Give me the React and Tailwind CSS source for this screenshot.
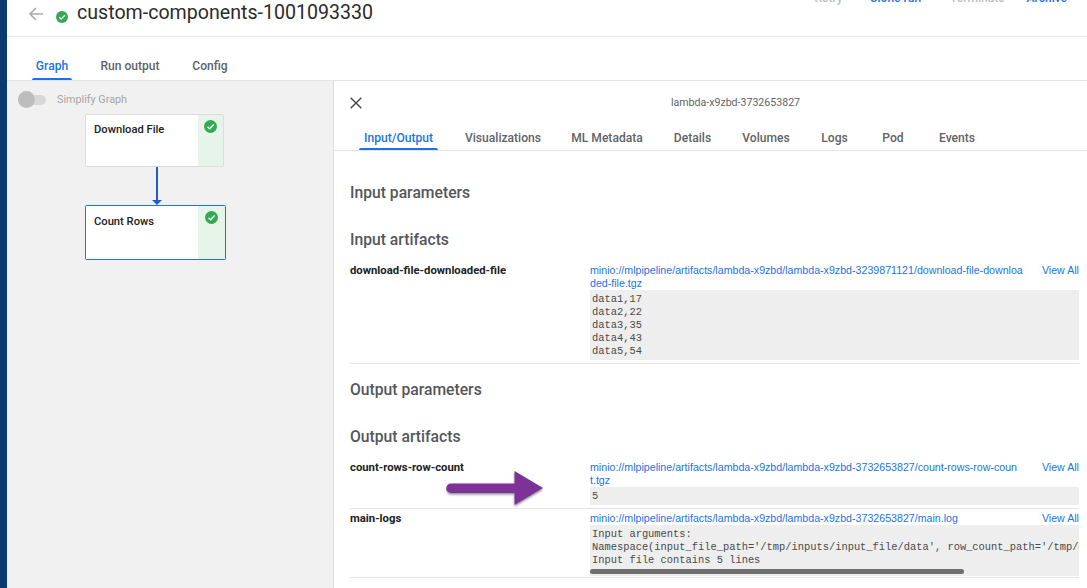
import React from "react";

const Check = ({ size = 14, className = "" }) => (
  <svg width={size} height={size} viewBox="0 0 24 24" className={className}>
    <circle cx="12" cy="12" r="12" fill="#34a853" />
    <path d="M6.5 12.5l3.8 3.8 7.5-7.8" fill="none" stroke="#fff" strokeWidth="2.6" />
  </svg>
);

const Tab = ({ label, active, w, pt }) => (
  <div className={`flex h-full flex-col items-center ${w}`}>
    <div className={`flex-1 flex items-center justify-center text-[12.1px] font-medium whitespace-nowrap ${pt} ${active ? "text-[#1a73e8]" : "text-[#5f6368]"}`}>{label}</div>
    <div className={`h-[2px] w-full rounded-t ${active ? "bg-[#1a73e8]" : "bg-transparent"}`} />
  </div>
);

const Node = ({ title, frame, strip, pt }) => (
  <div className={`rounded-[2px] p-[1px] ${frame}`}>
    <div className="flex h-full bg-white">
      <div className={`flex-1 pl-2 text-[11.2px] leading-[14px] font-medium text-[#202124] ${pt}`}>{title}</div>
      <div className={`flex shrink-0 justify-center bg-[#e6f4ea] pt-[5px] ${strip}`}>
        <Check size={13} />
      </div>
    </div>
  </div>
);

const Heading = ({ children, mt }) => (
  <div className={`text-[15.7px] leading-5 font-medium text-[#54575b] ${mt}`}>{children}</div>
);

const Row = ({ name, link, lines, h, scroll }) => (
  <div className={`flex ${h} border-b border-[#e4e4e4]`}>
    <div className="w-[240px] shrink-0 text-[11.3px] leading-[13px] font-bold text-[#202124]">{name}</div>
    <div className="flex min-w-0 flex-1 flex-col">
      <div className={`flex font-["Liberation_Sans",sans-serif] text-[10.65px]`}>
        <div className="w-[436px] shrink-0 leading-[13px] whitespace-nowrap text-[#1a73e8]">
          {link.map((l) => (
            <div key={l}>{l}</div>
          ))}
        </div>
        <div className="flex-1 text-right leading-[13px] whitespace-nowrap text-[#1a73e8]">View All</div>
      </div>
      <div className={`relative overflow-hidden bg-[#eeeeee] pl-[2px] pt-[3px] pb-[2px] font-["Liberation_Mono",monospace] text-[10.4px] leading-[13px] whitespace-pre text-[#4a4a4a]`}>
        {lines.map((l) => (
          <div key={l}>{l}</div>
        ))}
        {scroll && <div className="mt-[2px] -ml-[2px] h-[5px] w-[374px] rounded-full bg-[#6e6e6e]" />}
      </div>
    </div>
  </div>
);

export default function App() {
  return (
    <div className={`relative flex h-[588px] w-[1087px] overflow-hidden bg-white font-["Roboto",sans-serif]`}>
      <div className="w-[7px] shrink-0 bg-[#0a3a70]" />
      <div className="flex min-w-0 flex-1 flex-col">
        <div className="flex h-[37px] shrink-0 items-start border-b border-[#e8e8e8]">
          <svg width="16" height="16" viewBox="0 0 16 16" className="ml-[21px] mt-[6px]">
            <path d="M15 8H2M8 2L2 8l6 6" fill="none" stroke="#a9a9a9" strokeWidth="1.5" />
          </svg>
          <Check size={12} className="ml-[12px] mt-[11px]" />
          <div className="ml-[9px] mt-[1px] text-[19.6px] leading-6 text-[#2b2b2b] whitespace-nowrap">custom-components-1001093330</div>
          <div className="ml-auto -mt-[10px] flex text-[12px] font-medium leading-4">
            <span className="text-[#bdbdbd]">Retry</span>
            <span className="ml-[27px] text-[#1a73e8]">Clone run</span>
            <span className="ml-[29px] text-[#bdbdbd]">Terminate</span>
            <span className="ml-[22px] mr-[20px] text-[#1a73e8]">Archive</span>
          </div>
        </div>
        <div className="flex h-[44px] shrink-0 border-b border-[#e4e4e4] pl-[25px]">
          <Tab label="Graph" active w="w-[40px]" pt="pt-[17px]" />
          <Tab label="Run output" w="ml-[28px] w-[60px]" pt="pt-[17px]" />
          <Tab label="Config" w="ml-[32px] w-[36px]" pt="pt-[17px]" />
        </div>
        <div className="flex min-h-0 flex-1">
          <div className="w-[327px] shrink-0 border-r border-[#e0e0e0] bg-[#f1f1f1]">
            <div className="flex h-[33px] items-center pl-[11px] pt-[5px]">
              <div className="relative h-[10px] w-[28px] rounded-full bg-[#d8d8d8]">
                <div className="absolute -top-[4px] left-0 h-[17px] w-[17px] rounded-full bg-[#bdbdbd]" />
              </div>
              <span className="ml-[11px] text-[10.8px] text-[#a4a4a4]">Simplify Graph</span>
            </div>
            <div className="ml-[78px]">
              <Node title="Download File" frame="h-[53px] w-[139px] bg-[#dcdcdc]" strip="w-[25px]" pt="pt-[8px]" />
              <div className="ml-[69px] flex h-[38px] flex-col items-center w-[6px]">
                <div className="w-[2px] flex-1 bg-[#1a5fd0]" />
                <div className="h-0 w-0 border-x-[5px] border-t-[5px] border-x-transparent border-t-[#1a5fd0]" />
              </div>
              <Node title="Count Rows" frame="h-[55px] w-[141px] bg-[#1a73e8]" strip="w-[27px]" pt="pt-[9px]" />
            </div>
          </div>
          <div className="min-w-0 flex-1 flex flex-col">
            <div className="relative flex h-[43px] shrink-0 items-center justify-center pl-[50px] text-[10.6px] text-[#5f6368]">
              <svg width="12" height="12" viewBox="0 0 12 12" className="absolute left-[16px] top-[16px]">
                <path d="M.7.7l10.6 10.6M11.3.7L.7 11.3" stroke="#444" strokeWidth="1.4" />
              </svg>
              <span className="pt-[1px]">lambda-x9zbd-3732653827</span>
            </div>
            <div className="flex h-[27px] shrink-0 border-b border-[#e4e4e4] pl-[25px]">
              <Tab label="Input/Output" active w="w-[79px]" pt="pt-[4px]" />
              <Tab label="Visualizations" w="ml-[28px] w-[74px]" pt="pt-[4px]" />
              <Tab label="ML Metadata" w="ml-[32px] w-[70px]" pt="pt-[4px]" />
              <Tab label="Details" w="ml-[32px] w-[37px]" pt="pt-[4px]" />
              <Tab label="Volumes" w="ml-[32px] w-[46px]" pt="pt-[4px]" />
              <Tab label="Logs" w="ml-[33px] w-[25px]" pt="pt-[4px]" />
              <Tab label="Pod" w="ml-[36px] w-[20px]" pt="pt-[4px]" />
              <Tab label="Events" w="ml-[36px] w-[36px]" pt="pt-[4px]" />
            </div>
            <div className="flex-1 pl-[16px] pr-[8px]">
              <Heading mt="mt-[32px]">Input parameters</Heading>
              <Heading mt="mt-[27px]">Input artifacts</Heading>
              <Row
                name="download-file-downloaded-file"
                link={["minio://mlpipeline/artifacts/lambda-x9zbd/lambda-x9zbd-3239871121/download-file-downloa", "ded-file.tgz"]}
                lines={["data1,17", "data2,22", "data3,35", "data4,43", "data5,54"]}
                h="mt-[14px] h-[100px]"
              />
              <Heading mt="mt-[16px]">Output parameters</Heading>
              <Heading mt="mt-[27px]">Output artifacts</Heading>
              <Row
                name="count-rows-row-count"
                link={["minio://mlpipeline/artifacts/lambda-x9zbd/lambda-x9zbd-3732653827/count-rows-row-coun", "t.tgz"]}
                lines={["5"]}
                h="mt-[14px] h-[48px]"
              />
              <Row
                name="main-logs"
                link={["minio://mlpipeline/artifacts/lambda-x9zbd/lambda-x9zbd-3732653827/main.log"]}
                lines={["Input arguments:", "Namespace(input_file_path='/tmp/inputs/input_file/data', row_count_path='/tmp/outputs/row_count/data')", "Input file contains 5 lines"]}
                h="pt-[3px] h-[69px]"
                scroll
              />
            </div>
          </div>
        </div>
      </div>
      <svg width="100" height="44" viewBox="0 0 100 44" className="absolute left-[446px] top-[468px]">
        <defs>
          <filter id="s" x="-10%" y="-10%" width="125%" height="130%">
            <feDropShadow dx="0" dy="1.5" stdDeviation="1.2" floodColor="#000" floodOpacity="0.45" />
          </filter>
        </defs>
        <path d="M5 15.5H68.5V3L97 20 68.5 37V25H5a4.7 4.7 0 0 1 0-9.5z" fill="#7b3197" filter="url(#s)" />
      </svg>
    </div>
  );
}
